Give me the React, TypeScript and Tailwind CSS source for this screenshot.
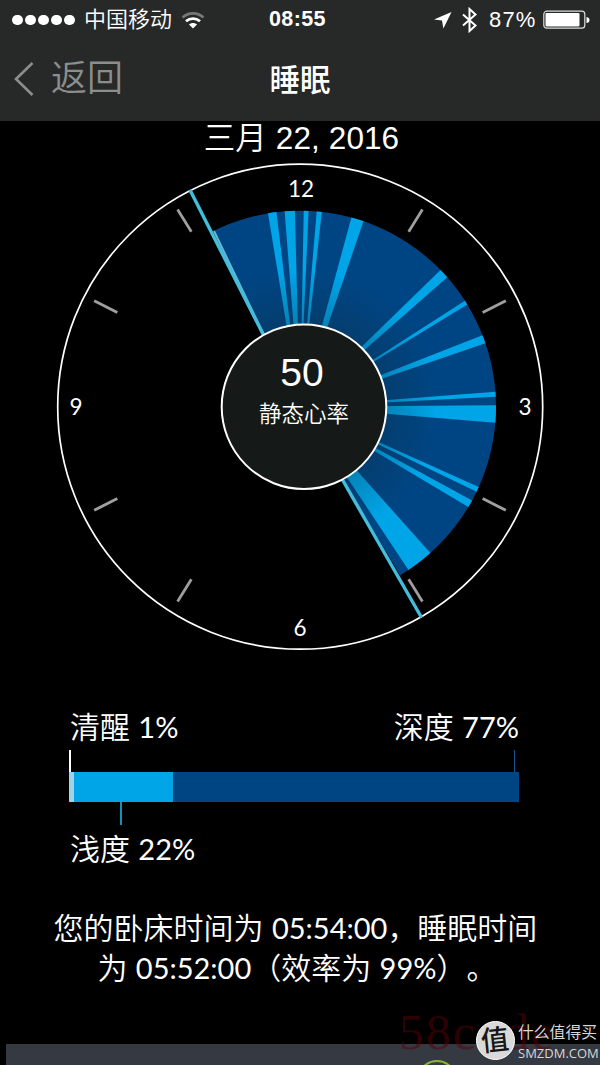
import React from 'react';

const CX = 300;
const CY = 406.7;
const TICK_CY = 405.5;
const SECTOR_RADIUS = 196;

// Degrees clockwise from 12 o'clock
const SLEEP_START = -26.3;
const SLEEP_END = 149.3;

const LIGHT_PHASES: [number, number][] = [
  [-9.4, -6.9],
  [-4.5, -1.5],
  [1.1, 2.5],
  [4.9, 6.4],
  [15.2, 18.9],
  [45.8, 48.7],
  [57.3, 58.6],
  [68.6, 71.1],
  [85.6, 87.1],
  [89.6, 94.7],
  [114.2, 115.7],
  [118.6, 120.8],
  [138.3, 146.4],
];

const TICKS = [32, 63, 117, 148, 212, 243, 297, 328];

const HOURS = [
  { label: '12', x: 301, y: 197 },
  { label: '3', x: 525, y: 415 },
  { label: '6', x: 300, y: 636 },
  { label: '9', x: 76, y: 415 },
];

const polar = (angle: number, radius: number, cy = CY) => {
  const rad = (angle * Math.PI) / 180;
  return { x: CX + radius * Math.sin(rad), y: cy - radius * Math.cos(rad) };
};

const wedge = (from: number, to: number) => {
  const a = polar(from, SECTOR_RADIUS);
  const b = polar(to, SECTOR_RADIUS);
  return `M${CX} ${CY}L${a.x} ${a.y}A${SECTOR_RADIUS} ${SECTOR_RADIUS} 0 0 1 ${b.x} ${b.y}Z`;
};

const StatusBar: React.FC = () => (
  <div className="flex h-10 items-center pl-3 pr-2.5">
    <div className="flex gap-[2.5px]">
      {[0, 1, 2, 3, 4].map((i) => (
        <span key={i} className="h-[10.6px] w-[10.6px] rounded-full bg-white" />
      ))}
    </div>
    <span className="ml-[9px] w-[88px] shrink-0 text-[22px] leading-none font-[350] whitespace-nowrap">中国移动</span>
    <svg className="ml-[9px] mt-0.5 shrink-0" width="24" height="20" viewBox="0 0 24 20" fill="none">
      <path d="M1.500 6.500C7.500 1 16.500 1 22.500 6.500" stroke="#777" strokeWidth="2.600" />
      <path d="M5 10.300C9 6.800 15 6.800 19 10.300" stroke="#fff" strokeWidth="2.800" />
      <path d="M8 13.500C10.300 11.500 13.700 11.500 16 13.500L12 17.500Z" fill="#fff" />
    </svg>
    <span className="ml-[64px] w-[60px] shrink-0 text-[21.5px] leading-none font-bold tracking-[0.4px]">08:55</span>
    <svg className="ml-[105px] shrink-0" width="18" height="18" viewBox="0 0 18 18" fill="#fff">
      <path d="M17.500 1L0 8.600L8 9.600L9.400 17.500Z" />
    </svg>
    <svg className="ml-2.5 shrink-0" width="16" height="26" viewBox="0 0 16 26" fill="none" stroke="#fff" strokeWidth="2">
      <path d="M1 7.500L13.500 18.500L7.500 24V2L13.500 7.500L1 18.500" />
    </svg>
    <span className="ml-[11px] w-[49px] shrink-0 text-[22px] leading-none tracking-[1.2px]">87%</span>
    <svg className="ml-[5px] shrink-0" width="47" height="20" viewBox="0 0 47 20">
      <rect x="0.800" y="1.200" width="41" height="17" rx="3" fill="none" stroke="#ddd" strokeWidth="1.200" />
      <rect x="2.500" y="3" width="34" height="13.500" rx="1" fill="#fff" />
      <path d="M43.500 7Q46.500 7.500 46.500 10T43.500 13Z" fill="#fff" />
    </svg>
  </div>
);

const NavBar: React.FC = () => (
  <div className="grid h-[81px] grid-cols-3 items-center pb-1 pl-3.5 pr-3.5">
    <div className="flex items-center text-[#8b8e8d]">
      <svg width="20" height="34" viewBox="0 0 20 34" fill="none" stroke="currentColor" strokeWidth="2.600">
        <path d="M18.500 1L2 17L18.500 33" />
      </svg>
      <span className="ml-[17px] text-[36px] leading-none font-[350]">返回</span>
    </div>
    <span className="mt-1 text-center text-[30.5px] leading-none font-medium">睡眠</span>
  </div>
);

const SleepDial: React.FC = () => (
  <svg className="block h-[502px] w-[600px]" viewBox="0 158 600 502">
    <defs>
      <radialGradient id="core" gradientUnits="userSpaceOnUse" cx={CX} cy={CY} r={SECTOR_RADIUS}>
        <stop offset="0.400" stopColor="#102a38" stopOpacity="0.300" />
        <stop offset="0.700" stopColor="#102a38" stopOpacity="0" />
      </radialGradient>
    </defs>
    <circle cx="300.200" cy={CY} r="242.500" fill="none" stroke="#fff" strokeWidth="1.700" />
    {TICKS.map((angle) => {
      const a = polar(angle, 205, TICK_CY);
      const b = polar(angle, 231, TICK_CY);
      return <line key={angle} x1={a.x} y1={a.y} x2={b.x} y2={b.y} stroke="#a09f9f" strokeWidth="2.800" />;
    })}
    <path d={wedge(SLEEP_START, SLEEP_END)} fill="#004583" />
    {LIGHT_PHASES.map(([from, to]) => (
      <path key={from} d={wedge(from, to)} fill="#00a5e8" />
    ))}
    <path d={wedge(SLEEP_START, SLEEP_END)} fill="url(#core)" />
    <path d="M214 231L264 335" stroke="#65b9d9" strokeWidth="2" />
    <path d="M190 190L263.500 335M342 479L421.500 617.500" stroke="#43bddb" strokeWidth="3.400" />
    <circle cx="304" cy={CY} r="82.300" fill="#151918" stroke="#fff" strokeWidth="2" />
    <g fill="#fff" textAnchor="middle">
      {HOURS.map(({ label, x, y }) => (
        <text key={label} x={x} y={y} className="font-['Lato'] text-[22.5px]">{label}</text>
      ))}
      <text x="302" y="386" className="font-['Liberation_Sans'] text-[39px]">50</text>
      <text x="304" y="422" className="font-['Noto_Sans_CJK_SC'] text-[22.5px] font-[350]">静态心率</text>
    </g>
  </svg>
);

const Digits: React.FC<{ children: React.ReactNode }> = ({ children }) => (
  <span className="font-['Lato'] text-[29px] leading-none font-normal">{children}</span>
);

const SleepBar: React.FC = () => (
  <div className="ml-[69px] w-[450px] text-[30px] font-[350]">
    <div className="flex h-10 justify-between pl-px leading-[44px]">
      <span>清醒 <Digits>1%</Digits></span>
      <span>深度 <Digits>77%</Digits></span>
    </div>
    <div className="mt-1 flex h-[22px] justify-between pr-[4.5px]">
      <span className="w-[1.5px] bg-white" />
      <span className="w-px bg-[#14578f]" />
    </div>
    <div className="flex h-[30px]">
      <span className="w-[5px] bg-[#9fd3e8]" />
      <span className="w-[99px] bg-[#00a5e8]" />
      <span className="flex-1 bg-[#004583]" />
    </div>
    <div className="ml-[51px] h-[23px] w-[2px] bg-[#158fbd]" />
    <div className="mt-[3px] h-10 pl-px leading-[44px]">浅度 <Digits>22%</Digits></div>
  </div>
);

const Watermark: React.FC = () => (
  <div className="absolute bottom-0 right-0 flex h-[49px] w-[124px] items-center">
    <div className="flex h-[39px] w-[39px] shrink-0 items-center justify-center rounded-full border border-white bg-[#d9d9d9] text-[28px] leading-none font-medium text-[#171717]">
      <span className="-rotate-6">值</span>
    </div>
    <div className="ml-[3px] mt-1 whitespace-nowrap text-[#d7d7d7]">
      <div className="text-[15.8px] leading-5">什么值得买</div>
      <div className="font-['Open_Sans'] text-[13px] leading-5">SMZDM.COM</div>
    </div>
  </div>
);

export default function App() {
  return (
    <div className="relative flex h-[1065px] w-[600px] flex-col overflow-hidden bg-black font-['Liberation_Sans','Noto_Sans_CJK_SC',sans-serif] text-white [text-spacing-trim:space-all]">
      <header className="h-[121px] shrink-0 bg-[#262928]">
        <StatusBar />
        <NavBar />
      </header>
      <h1 className="h-[37px] shrink-0 pl-[3px] text-center text-[31.5px] leading-[35px] font-[350] tracking-[0.1px]">三月 22, 2016</h1>
      <SleepDial />
      <div className="mt-[46px]">
        <SleepBar />
      </div>
      <div className="mt-[41px] flex flex-col items-center text-[30px] leading-10 font-[350] whitespace-nowrap">
        <p className="mr-[9px] h-10">您的卧床时间为 <Digits>05:54:00</Digits>，睡眠时间</p>
        <p className="mr-[6px] h-10">为 <Digits>05:52:00</Digits>（效率为 <Digits>99%</Digits>）。</p>
      </div>
      <div className="absolute bottom-0 left-[6px] right-0 h-[21px] overflow-hidden bg-[#353941]">
        <div className="ml-[411px] mt-4 h-10 w-10 rounded-full border-2 border-[#8aaf3c]" />
      </div>
      <div className="absolute left-[399px] top-[1007px] font-['Liberation_Serif'] text-[50px] leading-none tracking-[2px] whitespace-nowrap text-[#5a0005]/50">
        58code
      </div>
      <Watermark />
    </div>
  );
}
